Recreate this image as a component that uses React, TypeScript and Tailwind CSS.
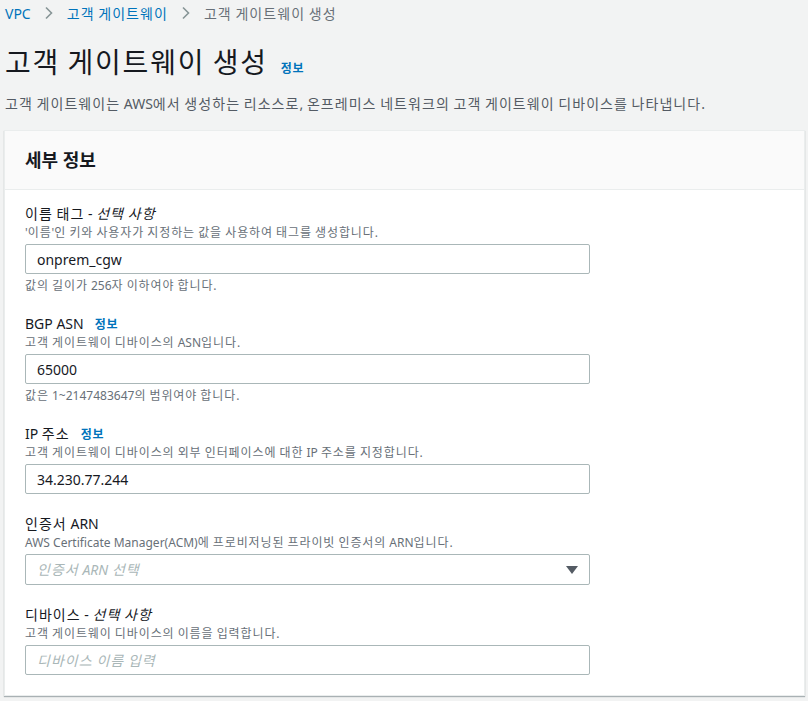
import React from "react";

const font = { fontFamily: '"Noto Sans", "Noto Sans CJK KR", sans-serif' };

// hangul runs in the reference are a bit wider than Noto CJK, so space them out
function K({ t, wide = "tracking-[0.075em]" }: { t: string; wide?: string }) {
  const parts = t.split(/([\uAC00-\uD7A3]+)/);
  return (
    <>
      {parts.map((p, i) =>
        /[\uAC00-\uD7A3]/.test(p) ? (
          <span key={i} className={wide}>
            {p}
          </span>
        ) : (
          <React.Fragment key={i}>{p}</React.Fragment>
        )
      )}
    </>
  );
}

function Chevron() {
  return (
    <svg width="10" height="14" viewBox="0 0 10 14" className="mx-[13px]">
      <path d="M2 1.5 L7.5 7 L2 12.5" fill="none" stroke="#879596" strokeWidth="1.6" />
    </svg>
  );
}

function Info() {
  return (
    <span className="text-[12px] leading-none font-bold text-[#0073bb] ml-[11px] tracking-[0.06em]">정보</span>
  );
}

function Field({
  label,
  optional,
  info,
  desc,
  children,
  hint,
}: {
  label: string;
  optional?: boolean;
  info?: boolean;
  desc: string;
  children: React.ReactNode;
  hint?: string;
}) {
  return (
    <div className="flex flex-col">
      <div className="h-[20px] text-[14px] leading-[20px] text-[#16191f]">
        <K t={label} />
        {optional && (
          <>
            {" - "}
            <i>
              <K t="선택 사항" />
            </i>
          </>
        )}
        {info && <Info />}
      </div>
      <div className="h-[17px] text-[12px] leading-[17px] text-[#687078]">
        <K t={desc} />
      </div>
      <div className="mt-[3px] w-[565px]">{children}</div>
      {hint && (
        <div className="mt-[4px] h-[16px] text-[12px] leading-[16px] text-[#687078]">
          <K t={hint} />
        </div>
      )}
    </div>
  );
}

function TextBox({ value, placeholder }: { value?: string; placeholder?: string }) {
  return (
    <div className="h-[30px] border border-[#aab7b8] rounded-[2px] bg-white flex items-center px-[11px] text-[14px]">
      {value ? (
        <span className="text-[#16191f]">{value}</span>
      ) : (
        <i className="text-[#aab7b8]">
          <K t={placeholder ?? ""} />
        </i>
      )}
    </div>
  );
}

export default function App() {
  return (
    <div className="w-[808px] h-[701px] bg-[#f2f3f3] overflow-hidden" style={font}>
      <nav className="flex items-center h-[26px] pl-[5px] text-[14px]">
        <span className="text-[#0073bb]">VPC</span>
        <Chevron />
        <span className="text-[#0073bb]">
          <K t="고객 게이트웨이" />
        </span>
        <Chevron />
        <span className="text-[#687078]">
          <K t="고객 게이트웨이 생성" />
        </span>
      </nav>
      <div className="flex items-baseline pl-[5px] mt-[16px]">
        <h1 className="text-[28px] leading-[40px] text-[#16191f]">
          <K t="고객 게이트웨이 생성" wide="tracking-[0.065em]" />
        </h1>
        <span className="text-[12px] font-bold text-[#0073bb] ml-[13px] tracking-[0.06em]">정보</span>
      </div>
      <p className="pl-[5px] mt-[12px] text-[14px] leading-[20px] text-[#545b64] whitespace-nowrap">
        <K t="고객 게이트웨이는 AWS에서 생성하는 리소스로, 온프레미스 네트워크의 고객 게이트웨이 디바이스를 나타냅니다." />
      </p>
      <div className="ml-[4px] mr-[3px] mt-[16px] bg-white border border-[#eaeded] shadow-[0_1px_1px_0_rgba(0,28,36,0.3)]">
        <div className="h-[59px] bg-[#fafafa] border-b border-[#eaeded] flex items-center px-[20px]">
          <h2 className="text-[18px] font-bold text-[#16191f]">세부 정보</h2>
        </div>
        <div className="pl-[20px] pt-[14px] pb-[20px] flex flex-col gap-[20px]">
          <Field
            label="이름 태그"
            optional
            desc="'이름'인 키와 사용자가 지정하는 값을 사용하여 태그를 생성합니다."
            hint="값의 길이가 256자 이하여야 합니다."
          >
            <TextBox value="onprem_cgw" />
          </Field>
          <Field
            label="BGP ASN"
            info
            desc="고객 게이트웨이 디바이스의 ASN입니다."
            hint="값은 1~2147483647의 범위여야 합니다."
          >
            <TextBox value="65000" />
          </Field>
          <Field label="IP 주소" info desc="고객 게이트웨이 디바이스의 외부 인터페이스에 대한 IP 주소를 지정합니다.">
            <TextBox value="34.230.77.244" />
          </Field>
          <Field label="인증서 ARN" desc="AWS Certificate Manager(ACM)에 프로비저닝된 프라이빗 인증서의 ARN입니다.">
            <div className="h-[31px] border border-[#aab7b8] rounded-[2px] bg-white flex items-center justify-between px-[11px] text-[14px]">
              <i className="text-[#aab7b8]">
                <K t="인증서 ARN 선택" />
              </i>
              <svg width="12" height="10" viewBox="0 0 12 10">
                <path d="M0 1 H12 L6 9 Z" fill="#545b64" />
              </svg>
            </div>
          </Field>
          <Field label="디바이스" optional desc="고객 게이트웨이 디바이스의 이름을 입력합니다.">
            <TextBox placeholder="디바이스 이름 입력" />
          </Field>
        </div>
      </div>
    </div>
  );
}
